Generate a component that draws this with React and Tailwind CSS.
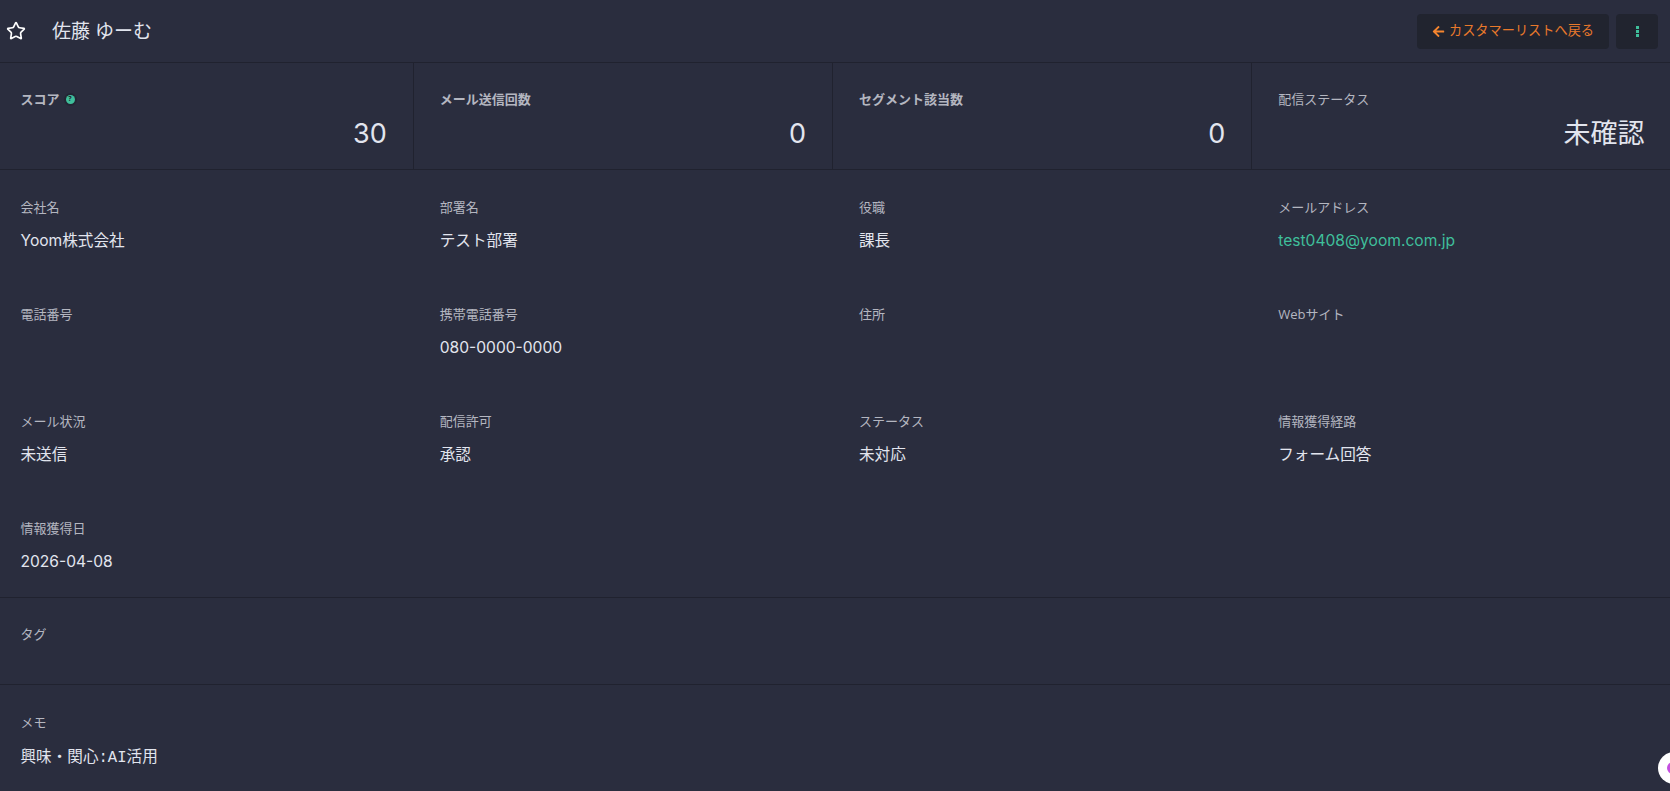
import { Star } from "lucide-react";

const font = "font-['Open_Sans','Noto_Sans_CJK_JP',sans-serif]";
const valueFont = "font-['Inter','Noto_Sans_CJK_JP',sans-serif]";

const stats = [
  { label: "スコア", value: "30", help: true },
  { label: "メール送信回数", value: "0" },
  { label: "セグメント該当数", value: "0" },
  { label: "配信ステータス", value: "未確認", plain: true },
];

const fields = [
  { label: "会社名", value: "Yoom株式会社" },
  { label: "部署名", value: "テスト部署" },
  { label: "役職", value: "課長" },
  { label: "メールアドレス", value: "test0408@yoom.com.jp", link: true },
  { label: "電話番号" },
  { label: "携帯電話番号", value: "080-0000-0000" },
  { label: "住所" },
  { label: "Webサイト" },
  { label: "メール状況", value: "未送信" },
  { label: "配信許可", value: "承認" },
  { label: "ステータス", value: "未対応" },
  { label: "情報獲得経路", value: "フォーム回答" },
  { label: "情報獲得日", value: "2026-04-08" },
];

function Field({ label, value, link }) {
  return (
    <div className="h-[107px] pl-[26px] pt-[27px]">
      <div className="text-[13px] leading-[20px] text-[#b4b6c0]">{label}</div>
      {value && (
        <div className={`mt-[12px] text-[15.6px] leading-[24px] ${valueFont} ${link ? "text-[#3fbf9b]" : "text-[#e2e5ee]"}`}>
          {value}
        </div>
      )}
    </div>
  );
}

export default function App() {
  return (
    <div className={`relative h-[791px] w-[1670px] overflow-hidden bg-[#2a2d3e] ${font}`}>
      {/* Header */}
      <div className="flex h-[63px] items-center border-b border-[#20222f] pr-[12px]">
        <Star className="ml-[6px] text-white" size={20} strokeWidth={2} />
        <h1 className="ml-[26px] text-[19px] font-normal text-[#e2e5ee]">佐藤 ゆーむ</h1>
        <div className="ml-auto flex gap-[7px]">
          <button className="flex h-[35px] w-[192px] items-center justify-center gap-[4px] rounded-[4px] bg-[#21242f] text-[13.2px] text-[#e9792b]">
            <svg width="13" height="13" viewBox="0 0 448 512" className="fill-[#f5852f]">
              <path d="M257.5 445.1l-22.2 22.2c-9.4 9.4-24.6 9.4-33.9 0L7 273c-9.4-9.4-9.4-24.6 0-33.9L201.4 44.7c9.4-9.4 24.6-9.4 33.9 0l22.2 22.2c9.5 9.5 9.3 25-.4 34.3L136.6 216H424c13.3 0 24 10.7 24 24v32c0 13.3-10.7 24-24 24H136.6l120.5 114.8c9.8 9.3 10 24.8.4 34.3z" />
            </svg>
            カスタマーリストへ戻る
          </button>
          <button className="flex h-[35px] w-[42px] flex-col items-center justify-center gap-[1px] rounded-[4px] bg-[#21242f]">
            <span className="h-[3px] w-[3px] bg-[#3fbf9b]"></span>
            <span className="h-[3px] w-[3px] bg-[#3fbf9b]"></span>
            <span className="h-[3px] w-[3px] bg-[#3fbf9b]"></span>
          </button>
        </div>
      </div>

      {/* Stats */}
      <div className="ml-[-5.5px] grid h-[107px] w-[1677px] grid-cols-4 border-b border-[#20222f]">
        {stats.map((s) => (
          <div key={s.label} className="border-r border-[#20222f] pl-[26px] pr-[26px] pt-[26px] last:border-r-0 last:pr-[27px]">
            <div className={`flex items-center gap-[6px] text-[13px] leading-[20px] text-[#b4b6c0] ${s.plain ? "" : "font-bold"}`}>
              {s.label}
              {s.help && (
                <span className="flex h-[9px] w-[9px] items-center justify-center rounded-full bg-[#3fbf9b] text-[7px] font-bold text-[#20222f] ring-2 ring-[#20222f]/60">
                  ?
                </span>
              )}
            </div>
            <div className={`mt-[6px] text-right text-[27px] leading-[38px] text-[#e2e5ee] ${valueFont}`}>{s.value}</div>
          </div>
        ))}
      </div>

      {/* Fields */}
      <div className="h-[428px] border-b border-[#20222f]">
        <div className="ml-[-5.5px] grid w-[1677px] grid-cols-4">
          {fields.map((f) => (
            <Field key={f.label} {...f} />
          ))}
        </div>
      </div>

      {/* Tags */}
      <div className="h-[87px] border-b border-[#20222f] pl-[20.5px] pt-[26px]">
        <div className="text-[13px] leading-[20px] text-[#b4b6c0]">タグ</div>
      </div>

      {/* Memo */}
      <div className="pl-[20.5px] pt-[27px]">
        <div className="text-[13px] leading-[20px] text-[#b4b6c0]">メモ</div>
        <div className={`mt-[13px] text-[15.6px] leading-[24px] text-[#e2e5ee] ${valueFont}`}>
          興味・関心<span className="font-['Liberation_Mono','Noto_Sans_CJK_JP',monospace]">:AI</span>活用
        </div>
      </div>

      {/* Chat bubble, cut off by the window edge */}
      <div className="absolute left-[1658px] top-[752px] flex h-[32px] w-[32px] items-center rounded-full bg-white pl-[9px]">
        <span className="h-[12px] w-[12px] rounded-full bg-[#c44fe0]"></span>
      </div>
    </div>
  );
}
